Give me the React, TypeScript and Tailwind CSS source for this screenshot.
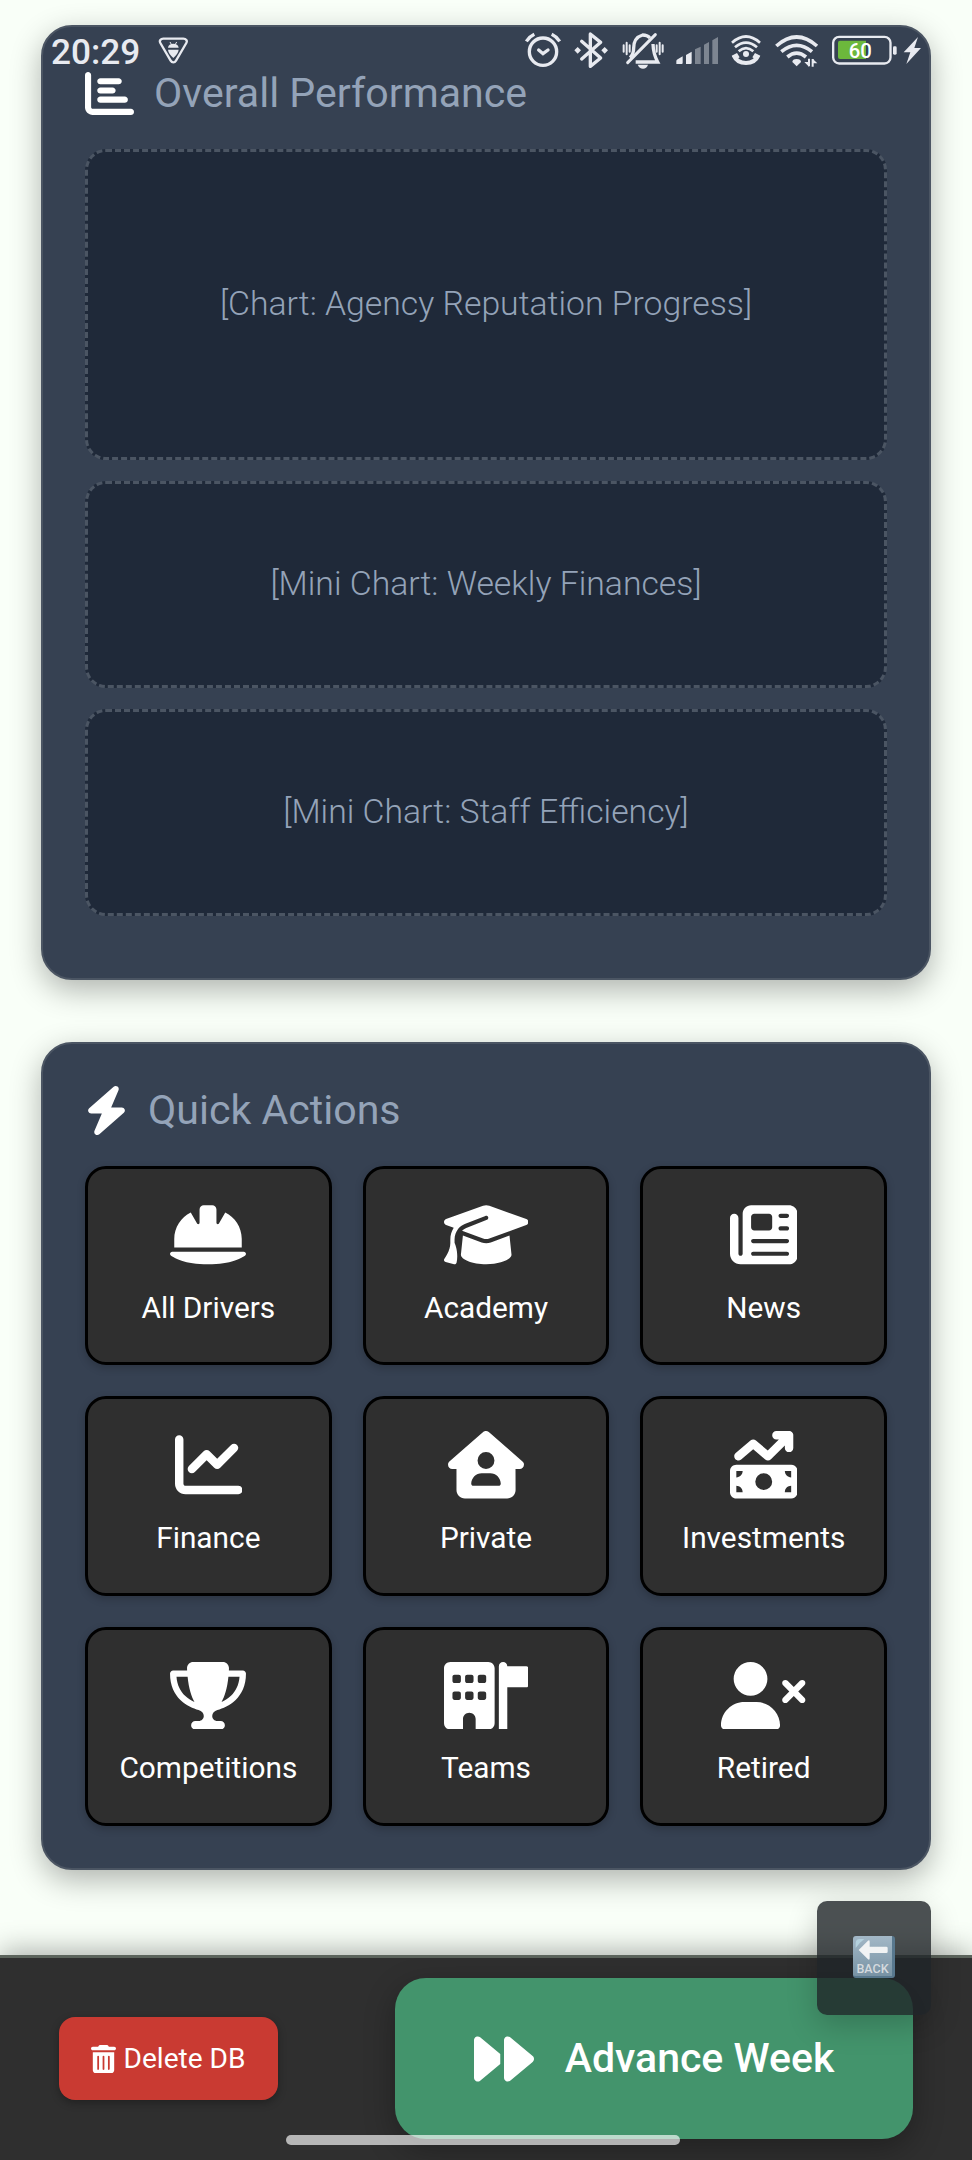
import type { ReactNode } from "react";
import type { IconType } from "react-icons";
import {
  FaBolt,
  FaBuildingFlag,
  FaChartBar,
  FaChartLine,
  FaForward,
  FaGraduationCap,
  FaHelmetSafety,
  FaHouseUser,
  FaMoneyBillTrendUp,
  FaNewspaper,
  FaTrashCan,
  FaTrophy,
  FaUserXmark,
} from "react-icons/fa6";

type Action = { label: string; icon: IconType; size: string };

const actions: Action[] = [
  { label: "All Drivers", icon: FaHelmetSafety, size: "w-[76px]" },
  { label: "Academy", icon: FaGraduationCap, size: "w-[84.4px]" },
  { label: "News", icon: FaNewspaper, size: "w-[67.5px]" },
  { label: "Finance", icon: FaChartLine, size: "w-[67.5px]" },
  { label: "Private", icon: FaHouseUser, size: "w-[76px]" },
  { label: "Investments", icon: FaMoneyBillTrendUp, size: "w-[67.5px]" },
  { label: "Competitions", icon: FaTrophy, size: "w-[76px]" },
  { label: "Teams", icon: FaBuildingFlag, size: "w-[84.4px]" },
  { label: "Retired", icon: FaUserXmark, size: "w-[84.4px]" },
];

function StatusBar() {
  return (
    <div className="absolute inset-x-0 top-[30px] flex h-10 items-center justify-between pr-[48.67px] pl-[51px] text-[#e8eaf0]">
      <div className="flex items-center">
        <span className="w-[107px] pt-[3px] text-[35.2px] leading-10 font-medium">20:29</span>
        {/* debug triangle */}
        <svg viewBox="385 78 92 86" className="h-[28.67px] w-[30.67px]">
          <path d="M401 86h60c8 0 13 6 9 13l-31 53c-4 7-12 7-16 0l-31-53c-4-7 1-13 9-13z" fill="none" stroke="currentColor" strokeWidth="7" />
          <path d="M415 113c1-8 7-12 16-12s15 4 16 12zM415 119h32c-1 10-7 16-16 25-9-9-15-15-16-25z" fill="currentColor" />
          <path d="M421 96l4 7M441 96l-4 7" stroke="currentColor" strokeWidth="3" />
        </svg>
      </div>
      <div className="flex items-center">
        {/* alarm */}
        <svg viewBox="40 30 135 120" className="h-10 w-[45px]" fill="none" stroke="currentColor" strokeLinecap="round">
          <circle cx="100" cy="95" r="41" strokeWidth="10" />
          <path d="M50 64Q59 50 74 43M126 43Q141 50 150 64" strokeWidth="10" strokeLinecap="butt" />
          <path d="M87 90l13 11 15-11" strokeWidth="10" />
        </svg>
        {/* bluetooth */}
        <svg viewBox="175 30 140 120" className="h-10 w-[46.67px]" fill="none" stroke="currentColor" strokeLinecap="round" strokeLinejoin="round">
          <path d="M216 64l57 50-31 25V42l31 25-57 50" strokeWidth="10" />
          <path d="M194 91l10-10 10 10-10 10zM275 91l10-10 10 10-10 10z" fill="currentColor" stroke="none" />
        </svg>
        {/* muted bell */}
        <svg viewBox="315 30 165 120" className="h-10 w-[55px]" fill="none" stroke="currentColor">
          <path d="M360 113q11-10 11-29 0-31 27-39 14 0 22 9M429 72q1 30 14 54h-66" strokeWidth="10" />
          <path d="M436 44l-83 84" strokeWidth="9" strokeLinecap="round" />
          <path d="M383 134h31q-4 12-15 12t-16-12z" fill="currentColor" stroke="none" />
          <path d="M341 76v19M350 68v35M359 76v19M440 76v19M449 68v35M458 76v19" strokeWidth="6" strokeLinecap="round" />
        </svg>
        {/* cell signal */}
        <svg viewBox="480 30 162 120" className="h-10 w-[54px]" fill="currentColor">
          <path d="M499 132v-9q0-3 4-5l15-9v20q0 3-3 3zM528 132v-27l17-10v34q0 3-3 3z" />
          <path d="M555 132V88l17-8v52zM582 132V74l15-8v66zM607 132V61l17-10v81z" opacity="0.4" />
        </svg>
        {/* hotspot */}
        <svg viewBox="642 30 132 120" className="h-10 w-[44px]" fill="none" stroke="currentColor">
          <path d="M666 68q42-37 84 0M675 82q33-28 66 0M686 94q22-19 44 0" strokeWidth="8" />
          <circle cx="708" cy="102" r="9" fill="currentColor" stroke="none" />
          <path d="M671 106q10 23 37 23t37-23" strokeWidth="12" />
          <path d="M665 107l16-8 8 13-13 8zM751 107l-16-8-8 13 13 8z" fill="currentColor" stroke="none" />
        </svg>
        {/* wifi */}
        <svg viewBox="774 30 171 120" className="h-10 w-[57px]" fill="none" stroke="currentColor">
          <path d="M799 78q61-54 122 0M814 95q46-38 92 0" strokeWidth="11" />
          <path d="M832 111q28-23 56 0" strokeWidth="11" />
          <path d="M847 126q0-9 13-9t13 9l-13 13z" fill="currentColor" stroke="none" />
          <path d="M897 139v-23M908 117v23" strokeWidth="6" />
          <path d="M883 126h14v14zM922 130h-14v-14z" fill="currentColor" stroke="none" />
        </svg>
        {/* battery */}
        <svg viewBox="945 30 225 120" className="h-10 w-[75px]">
          <rect x="969.5" y="50.5" width="172" height="80" rx="18" fill="none" stroke="currentColor" strokeWidth="7" />
          <path d="M990 62h78v55h-78q-6 0-6-6V68q0-6 6-6z" fill="#6cb83c" />
          <rect x="1149" y="79" width="11" height="25" rx="4" fill="currentColor" />
          <text x="1051" y="113" textAnchor="middle" fontSize="61" fontWeight="500" fill="#fff">60</text>
        </svg>
        {/* charging */}
        <svg viewBox="1170 30 70 120" className="h-10 w-[23.33px]" fill="currentColor">
          <path d="M1224 51l-43 46h20l-12 35 44-48h-20z" />
        </svg>
      </div>
    </div>
  );
}

type CardProps = {
  title: string;
  icon: IconType;
  iconSize: string;
  className: string;
  children: ReactNode;
};

function Card({ title, icon: Icon, iconSize, className, children }: CardProps) {
  return (
    <section className={`shrink-0 rounded-[31px] border-2 border-[#4b5563] bg-[#364152] px-[42px] pt-[42px] shadow-[0_10px_31px_rgba(0,0,0,0.3)] ${className}`}>
      <h2 className="mb-[31px] flex h-[49px] items-center gap-[20px] text-[41.1px] leading-[49px] font-[450] text-[#94a3b8]">
        <Icon className={`h-[49px] text-white ${iconSize}`} />
        {title}
      </h2>
      {children}
    </section>
  );
}

function ChartBox({ label, className }: { label: string; className: string }) {
  return (
    <div className={`flex items-center justify-center rounded-[21px] border-3 border-dashed border-[#4b5563] bg-[#1f2939] text-[33.75px] font-light text-[#94a3b8] ${className}`}>
      {label}
    </div>
  );
}

export default function App() {
  return (
    <div className="relative h-[2160px] w-[972px] overflow-hidden bg-[#f9fff8] font-[Roboto,sans-serif]">
      <main className="flex h-[1955px] flex-col gap-[62.5px] px-[41px] pt-[25px]">
        <Card title="Overall Performance" icon={FaChartBar} iconSize="w-[49px]" className="h-[954.5px]">
          <div className="flex flex-col gap-[21px]">
            <ChartBox label="[Chart: Agency Reputation Progress]" className="h-[310.5px]" />
            <ChartBox label="[Mini Chart: Weekly Finances]" className="h-[207px]" />
            <ChartBox label="[Mini Chart: Staff Efficiency]" className="h-[207px]" />
          </div>
        </Card>
        <Card title="Quick Actions" icon={FaBolt} iconSize="w-[43px]" className="h-[828px]">
          <div className="grid grid-cols-3 gap-[31px]">
            {actions.map(({ label, icon: Icon, size }) => (
              <button
                key={label}
                className="flex h-[199.3px] flex-col items-center rounded-[21px] border-3 border-black bg-[#2f2f2f] pt-[32px] text-[29.8px] leading-[34px] font-[450] text-white shadow-[0_3px_8px_rgba(0,0,0,0.2)]"
              >
                <Icon className={`mb-[22px] h-[67.5px] ${size}`} />
                {label}
              </button>
            ))}
          </div>
        </Card>
      </main>

      <footer className="relative flex h-[205px] items-start justify-between border-t-[3px] border-[#5c645c] bg-[#2f2f2f] px-[59px] shadow-[0_-5px_26px_rgba(0,0,0,0.3)]">
        <button className="mt-[59px] flex h-[83px] w-[219px] items-center justify-center gap-[7px] rounded-[16px] bg-[#c93a32] pt-px text-[28.1px] font-[450] text-white shadow-[0_3px_8px_rgba(0,0,0,0.3)]">
          <FaTrashCan className="h-[28.5px] w-[25px]" />
          Delete DB
        </button>
        <button className="mt-[20px] flex h-[161px] w-[518px] items-center justify-center gap-[31px] rounded-[31px] bg-[#43946c] text-[41px] font-[530] text-white shadow-[0_10px_31px_rgba(0,0,0,0.3)]">
          <FaForward className="h-[60px] w-[60px]" />
          Advance Week
        </button>
      </footer>

      {/* floating back button */}
      <button className="absolute top-[1901px] left-[817px] flex h-[114px] w-[114px] items-center justify-center rounded-[10px] bg-[#1f2428]/80 shadow-[0_10px_31px_rgba(0,0,0,0.2)]">
        <span className="mt-[-2px] flex h-[42px] w-[42px] flex-col items-center rounded-[3px] border-r-3 border-b-2 border-[#58788e] bg-linear-to-b from-[#a3b8c7] to-[#7893a4] text-[#d5dade]">
          <svg viewBox="1117 168 125 82" className="h-[27.33px] w-[41.67px]">
            <path d="M1128 204v-14q0-13 13-13h13q-14 10-26 27z" fill="#b4d1de" />
            <path d="M1137 210l28-28q5-3 5 3v15h50q4 0 4 4v11q0 4-4 4h-50v16q0 6-5 3z" fill="#f1f3f4" />
          </svg>
          <span className="text-[12.5px] leading-[11px] font-medium">BACK</span>
        </span>
      </button>

      {/* gesture bar */}
      <div className="absolute top-[2135px] left-[286px] h-[10px] w-[394px] rounded-full bg-white/65" />

      <StatusBar />
    </div>
  );
}
